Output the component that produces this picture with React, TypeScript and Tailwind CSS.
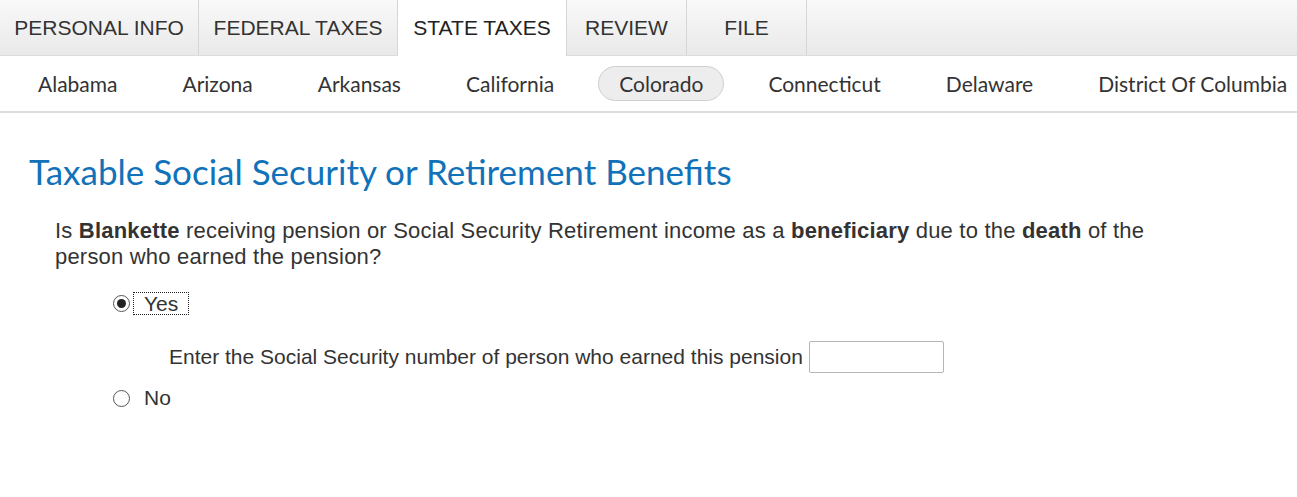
import React from "react";

const tabs = [
  { label: "PERSONAL INFO", w: "w-[199px]" },
  { label: "FEDERAL TAXES", w: "w-[199px]" },
  { label: "STATE TAXES", w: "w-[169px]", active: true },
  { label: "REVIEW", w: "w-[120px]" },
  { label: "FILE", w: "w-[120px]" },
];

const states = [
  "Alabama",
  "Arizona",
  "Arkansas",
  "California",
  "Colorado",
  "Connecticut",
  "Delaware",
  "District Of Columbia",
];

function Radio({ checked }: { checked?: boolean }) {
  return (
    <span className="inline-flex h-[17px] w-[17px] shrink-0 items-center justify-center rounded-full border border-[#555] bg-white">
      {checked && <span className="h-[9px] w-[9px] rounded-full bg-[#222]" />}
    </span>
  );
}

export default function App() {
  return (
    <div className="h-[497px] w-[1297px] overflow-hidden bg-white text-[#333]">
      {/* Top tabs */}
      <div className="flex h-[56px] border-b border-[#dcdcdc] bg-gradient-to-b from-[#f9f9f9] to-[#e9e9e9] font-['Liberation_Sans',Arial,sans-serif] text-[21px]">
        {tabs.map((t) => (
          <div
            key={t.label}
            className={`${t.w} flex items-center justify-center border-r border-[#d6d6d6] ${
              t.active ? "-mb-px bg-white text-[#222]" : "text-[#333]"
            }`}
          >
            {t.label}
          </div>
        ))}
      </div>

      {/* State sub nav */}
      <div className="flex h-[57px] items-center gap-[23px] whitespace-nowrap border-b-2 border-[#dddddd] pl-[17px] font-['Lato',sans-serif] text-[21px] text-[#333]">
        {states.map((s) => (
          <div
            key={s}
            className={`flex h-[35px] items-center rounded-full px-[20px] ${
              s === "Colorado" ? "border border-[#cfcfcf] bg-[#ededed]" : "border border-transparent"
            }`}
          >
            {s}
          </div>
        ))}
      </div>

      {/* Content */}
      <div className="pl-[29px] pt-[38px]">
        <h1 className="font-['Lato',sans-serif] text-[35px] leading-[40px] text-[#1172b9]">
          Taxable Social Security or Retirement Benefits
        </h1>

        <div className="mt-[27px] w-[1150px] pl-[26px] font-['Liberation_Sans',Arial,sans-serif] text-[21px] leading-[26px] text-[#333]">
          <p className="text-[22px] tracking-[0.2px]">
            Is <b>Blankette</b> receiving pension or Social Security Retirement income as a{" "}
            <b>beneficiary</b> due to the <b>death</b> of the person who earned the pension?
          </p>

          <div className="mt-[22px] flex items-center pl-[58px]">
            <Radio checked />
            <span className="ml-[3px] border border-dotted border-[#222] px-[10px] leading-[21px]">Yes</span>
          </div>

          <div className="mt-[26px] flex items-center pl-[114px]">
            <span>Enter the Social Security number of person who earned this pension</span>
            <span className="ml-[6px] inline-block h-[32px] w-[135px] shrink-0 rounded-[2px] border border-[#b5b5b5] bg-white" />
          </div>

          <div className="mt-[12px] flex items-center pl-[58px]">
            <Radio />
            <span className="ml-[14px]">No</span>
          </div>
        </div>
      </div>
    </div>
  );
}
